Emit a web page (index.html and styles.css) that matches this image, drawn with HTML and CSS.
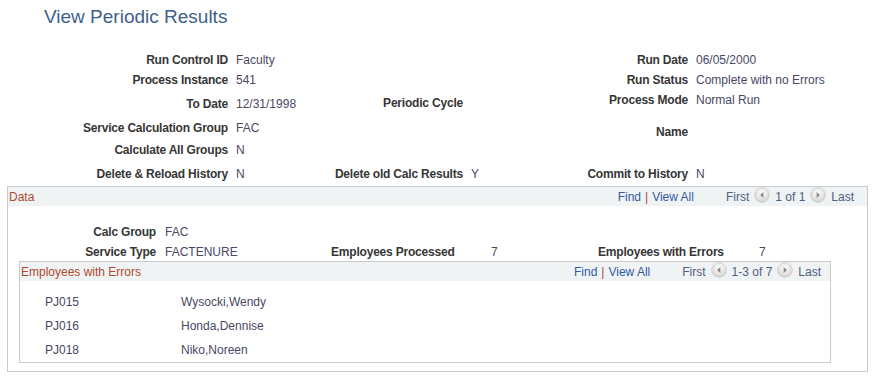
FILE: index.html
```html
<!DOCTYPE html>
<html>
<head>
<meta charset="utf-8">
<title>View Periodic Results</title>
<link rel="stylesheet" href="styles.css">
</head>
<body>
<div class="page">
  <h1 class="title">View Periodic Results</h1>

  <div class="fields">
    <div class="grid-left">
      <div class="lbl">Run Control ID</div><div class="val">Faculty</div><div></div><div></div>
      <div class="lbl">Process Instance</div><div class="val">541</div><div></div><div></div>
      <div class="lbl">To Date</div><div class="val">12/31/1998</div><div class="lbl lbl-up">Periodic Cycle</div><div></div>
      <div class="lbl">Service Calculation Group</div><div class="val">FAC</div><div></div><div></div>
      <div class="lbl">Calculate All Groups</div><div class="val">N</div><div></div><div></div>
      <div class="lbl">Delete &amp; Reload History</div><div class="val">N</div><div class="lbl">Delete old Calc Results</div><div class="val">Y</div>
    </div>
    <div class="grid-right">
      <div class="lbl">Run Date</div><div class="val">06/05/2000</div>
      <div class="lbl">Run Status</div><div class="val">Complete with no Errors</div>
      <div class="lbl">Process Mode</div><div class="val">Normal Run</div>
      <div class="lbl">Name</div><div class="val"></div>
      <div></div><div></div>
      <div class="lbl">Commit to History</div><div class="val">N</div>
    </div>
  </div>

  <section class="box box-data">
    <div class="box-head">
      <span class="box-title">Data</span>
      <span class="nav">
        <a class="link">Find</a><span class="sep">|</span><a class="link">View All</a>
        <span class="pager">
          <span class="pg">First</span>
          <span class="circ"><svg viewBox="0 0 16 16" width="16" height="16"><defs><radialGradient id="g1" cx="50%" cy="35%" r="60%"><stop offset="0" stop-color="#ffffff"/><stop offset="1" stop-color="#d6d6d6"/></radialGradient></defs><circle cx="8" cy="8" r="7.3" fill="url(#g1)" stroke="#c9c9c9" stroke-width="0.8"/><path d="M9.4 5 L6 8 L9.4 11 Z" fill="#8a8a8a"/></svg></span>
          <span class="pg">1 of 1</span>
          <span class="circ"><svg viewBox="0 0 16 16" width="16" height="16"><circle cx="8" cy="8" r="7.3" fill="url(#g1)" stroke="#c9c9c9" stroke-width="0.8"/><path d="M6.6 5 L10 8 L6.6 11 Z" fill="#8a8a8a"/></svg></span>
          <span class="pg">Last</span>
        </span>
      </span>
    </div>
    <div class="data-grid">
      <div class="lbl">Calc Group</div><div class="val v2">FAC</div><div></div><div></div><div></div><div></div>
      <div class="lbl">Service Type</div><div class="val v2">FACTENURE</div><div class="lbl la">Employees Processed</div><div class="val">7</div><div class="lbl la">Employees with Errors</div><div class="val">7</div>
    </div>

    <section class="box box-inner">
      <div class="box-head">
        <span class="box-title">Employees with Errors</span>
        <span class="nav nav-inner">
          <a class="link">Find</a><span class="sep">|</span><a class="link">View All</a>
          <span class="pager">
            <span class="pg">First</span>
            <span class="circ"><svg viewBox="0 0 16 16" width="16" height="16"><circle cx="8" cy="8" r="7.3" fill="url(#g1)" stroke="#c9c9c9" stroke-width="0.8"/><path d="M9.4 5 L6 8 L9.4 11 Z" fill="#8a8a8a"/></svg></span>
            <span class="pg">1-3 of 7</span>
            <span class="circ"><svg viewBox="0 0 16 16" width="16" height="16"><circle cx="8" cy="8" r="7.3" fill="url(#g1)" stroke="#c9c9c9" stroke-width="0.8"/><path d="M6.6 5 L10 8 L6.6 11 Z" fill="#8a8a8a"/></svg></span>
            <span class="pg">Last</span>
          </span>
        </span>
      </div>
      <div class="rows">
        <div class="row"><span class="id">PJ015</span><span class="nm">Wysocki,Wendy</span></div>
        <div class="row"><span class="id">PJ016</span><span class="nm">Honda,Dennise</span></div>
        <div class="row"><span class="id">PJ018</span><span class="nm">Niko,Noreen</span></div>
      </div>
    </section>
  </section>
</div>
</body>
</html>
```

FILE: styles.css
```css
html, body {
  margin: 0;
  padding: 0;
  background: #ffffff;
}

body {
  font-family: "Liberation Sans", Arial, sans-serif;
  font-size: 12px;
  color: #333333;
}

.page {
  width: 878px;
}

.title {
  margin: 0;
  padding: 5px 0 21px 44px;
  font-size: 19px;
  line-height: 24px;
  font-weight: normal;
  color: #3e5f8d;
}

.fields {
  display: flex;
  column-gap: 8px;
}

.grid-left {
  display: grid;
  grid-template-columns: 228px 89px 130px 100px;
  grid-template-rows: 20px 20px 28px 20px 24px 24px;
  column-gap: 8px;
}

.grid-right {
  display: grid;
  grid-template-columns: 109px 172px;
  grid-template-rows: 20px 20px 20px 44px 8px 24px;
  column-gap: 8px;
}

.lbl {
  font-weight: bold;
  letter-spacing: -0.2px;
  color: #363636;
  text-align: right;
  white-space: nowrap;
  display: flex;
  align-items: center;
  justify-content: flex-end;
}

.lbl-up {
  padding-bottom: 3px;
}

.val {
  color: #484865;
  white-space: nowrap;
  display: flex;
  align-items: center;
}

.box {
  border: 1px solid #c6ccd2;
  background: #ffffff;
}

.box-data {
  margin-left: 7px;
  width: 859px;
  padding-bottom: 8px;
}

.box-head {
  display: flex;
  align-items: center;
  justify-content: space-between;
  height: 19px;
  background: #f0f3f4;
  padding-left: 1px;
}

.box-title {
  color: #ae4a2c;
  font-size: 12px;
}

.nav {
  display: flex;
  align-items: center;
  padding-right: 13px;
}

.nav-inner {
  padding-right: 9px;
}

.link {
  color: #3359a5;
  text-decoration: none;
}

.sep {
  color: #b0473a;
  margin: 0 4px;
}

.pager {
  display: flex;
  align-items: center;
  margin-left: 32px;
  color: #4f5f82;
}

.pg {
  color: #4f5f82;
}

.circ {
  display: inline-flex;
  margin: 0 5px;
  position: relative;
  top: -2px;
}

.data-grid {
  display: grid;
  grid-template-columns: 148px 175px 160px 107px 161px 1fr;
  grid-template-rows: 21px 19px;
  padding-top: 15px;
}

.data-grid .v2 {
  padding-left: 9px;
}

.data-grid .la {
  justify-content: flex-start;
}

.box-inner {
  margin-left: 11px;
  width: 810px;
}

.rows {
  padding: 9px 0 0 25px;
}

.row {
  display: flex;
  align-items: center;
  height: 24px;
  color: #484865;
}

.id {
  width: 136px;
}
```
